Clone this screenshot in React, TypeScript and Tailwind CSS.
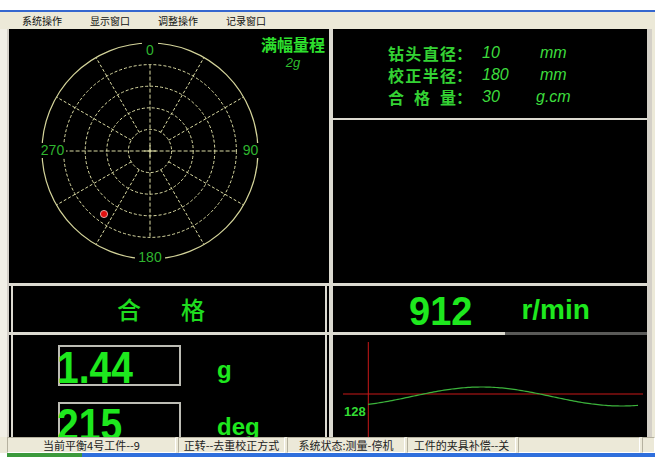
import React from "react";

const GRID = "#dcdca4";

function Polar() {
  const cx = 141;
  const cy = 122;
  const R = 108;
  const rings = [21.6, 43.2, 64.8, 86.4];
  const spokes = [30, 60, 120, 150, 210, 240, 300, 330];
  return (
    <svg width="320" height="254" viewBox="0 0 320 254" className="block">
      {rings.map((r) => (
        <circle key={r} cx={cx} cy={cy} r={r} fill="none" stroke={GRID} strokeWidth="1" strokeDasharray="3 2" />
      ))}
      {spokes.map((a) => {
        const rad = (a * Math.PI) / 180;
        return (
          <line
            key={a}
            x1={cx + 21.6 * Math.sin(rad)}
            y1={cy - 21.6 * Math.cos(rad)}
            x2={cx + R * Math.sin(rad)}
            y2={cy - R * Math.cos(rad)}
            stroke={GRID}
            strokeWidth="1"
            strokeDasharray="3 2"
          />
        );
      })}
      <line x1={cx - 86.4} y1={cy} x2={cx + 86.4} y2={cy} stroke={GRID} strokeWidth="1" strokeDasharray="4 2" />
      <line x1={cx} y1={cy - 86.4} x2={cx} y2={cy + 86.4} stroke={GRID} strokeWidth="1" strokeDasharray="4 2" />
      <line x1={cx - 6} y1={cy} x2={cx + 6} y2={cy} stroke={GRID} strokeWidth="1" />
      <line x1={cx} y1={cy - 6} x2={cx} y2={cy + 6} stroke={GRID} strokeWidth="1" />
      <circle cx={cx} cy={cy} r={R} fill="none" stroke="#d4d49a" strokeWidth="1.2" />
      <rect x="133" y="13" width="16" height="15" fill="#000" />
      <rect x="126" y="220" width="30" height="15" fill="#000" />
      <rect x="31" y="114" width="26" height="15" fill="#000" />
      <rect x="233" y="114" width="18" height="15" fill="#000" />
      <g fontFamily="'Liberation Sans', sans-serif" fontSize="14" fill="#2fb52f" textAnchor="middle">
        <text x="141" y="26">0</text>
        <text x="141" y="232.5">180</text>
        <text x="43.5" y="125.5">270</text>
        <text x="241.5" y="125.5">90</text>
      </g>
      <circle cx="95" cy="185" r="3.6" fill="#e01010" stroke="#f3c4c4" strokeWidth="0.8" />
    </svg>
  );
}

function Wave() {
  const pts: string[] = [];
  for (let x = 35; x <= 305; x += 2) {
    const y = 61.5 - 9.5 * Math.cos((2 * Math.PI * (x + 333 - 481.7)) / 280);
    pts.push(`${x},${y.toFixed(2)}`);
  }
  return (
    <svg width="314" height="102" viewBox="0 0 314 102" className="block">
      <line x1="35.3" y1="7" x2="35.3" y2="102" stroke="#c81818" strokeWidth="1" />
      <line x1="10" y1="59" x2="310" y2="59" stroke="#c81818" strokeWidth="1" />
      <polyline points={pts.join(" ")} fill="none" stroke="#3cb43c" strokeWidth="1.2" />
      <text x="11" y="81" fontFamily="'Liberation Sans', sans-serif" fontSize="13" fontWeight="bold" fill="#33dd33">
        128
      </text>
    </svg>
  );
}

const rows = [
  { label: ["钻", "头", "直", "径"], num: "10", unit: "mm", shift: false },
  { label: ["校", "正", "半", "径"], num: "180", unit: "mm", shift: false },
  { label: ["合", "格", "量"], num: "30", unit: "g.cm", shift: true },
];

export default function App() {
  return (
    <div className="w-[665px] h-[463px] bg-white overflow-hidden font-['Liberation_Sans','Noto_Sans_CJK_SC',sans-serif]">
      <div className="h-[10px]" />
      <div className="h-[2px] w-[655px] bg-[#3567cf]" />
      <div className="h-[17px] w-[655px] bg-[#ece9d8] flex items-center pl-[22px] text-[10px] text-[#111] font-['Noto_Sans_CJK_SC',sans-serif]">
        {["系统操作", "显示窗口", "调整操作", "记录窗口"].map((t) => (
          <div key={t} className="w-[68px] leading-none">
            {t}
          </div>
        ))}
      </div>

      <div className="flex h-[408px] w-[655px]">
        <div className="w-[7px] bg-[#f1efe6]" />
        <div className="w-[640px] flex bg-black border-l-2 border-[#d4d0c8]">
          {/* left column */}
          <div className="w-[320px] flex flex-col">
            <div className="h-[254px] relative">
              <Polar />
              <div className="absolute top-[7px] right-[4px] flex flex-col items-center">
                <span className="text-[16px] leading-[16px] font-bold text-[#2ee02e] font-['Noto_Sans_CJK_SC',sans-serif]">
                  满幅量程
                </span>
                <span className="mt-[4px] text-[13px] leading-none italic text-[#2ebd2e]">2g</span>
              </div>
            </div>
            <div className="h-[3px] bg-[#dcdad0]" />
            <div className="h-[46px] mx-[2px] border-x-2 border-[#dcdad0] flex items-center pl-[104px] gap-[40px] text-[24px] leading-none font-medium text-[#1fdc1f] font-['Noto_Sans_CJK_SC',sans-serif]">
              <span>合</span>
              <span>格</span>
            </div>
            <div className="h-[3px] bg-[#dcdad0]" />
            <div className="h-[102px] mx-[2px] border-x-2 border-[#dcdad0] overflow-hidden pl-[45px] pt-[10px] flex flex-col gap-[16px] text-[#1ee81e] font-bold">
              <div className="flex items-start">
                <div className="w-[123px] h-[41px] shrink-0 border-2 border-[#bcbcb4]">
                  <span className="block -ml-[3px] mt-[4px] text-[39px] leading-none origin-bottom scale-y-[1.12]">1.44</span>
                </div>
                <span className="ml-[36px] mt-[13px] text-[24px] leading-none">g</span>
              </div>
              <div className="flex items-start">
                <div className="w-[123px] h-[41px] shrink-0 border-2 border-[#bcbcb4]">
                  <span className="block -ml-[3px] mt-[4px] text-[39px] leading-none origin-bottom scale-y-[1.12]">215</span>
                </div>
                <span className="ml-[36px] mt-[13px] text-[24px] leading-none">deg</span>
              </div>
            </div>
          </div>

          <div className="w-[4px] bg-[#dcdad0]" />

          {/* right column */}
          <div className="w-[314px] flex flex-col">
            <div className="h-[89px] pt-[13px] pl-[55px] flex flex-col">
              {rows.map((r) => (
                <div key={r.num} className="h-[22px] flex items-center">
                  <div className="w-[94px] flex items-center text-[16px] leading-none font-bold text-[#34d234] font-['Noto_Sans_CJK_SC',sans-serif]">
                    <div className="w-[68px] flex justify-between">
                      {r.label.map((c) => (
                        <span key={c}>{c}</span>
                      ))}
                    </div>
                    <span>：</span>
                  </div>
                  <span className="w-[58px] text-[16px] leading-none italic text-[#3ddc3d]">{r.num}</span>
                  <span className={`text-[16px] leading-none italic text-[#3ddc3d] ${r.shift ? "-ml-[4px]" : ""}`}>{r.unit}</span>
                </div>
              ))}
            </div>
            <div className="h-[2px] bg-[#dcdad0]" />
            <div className="h-[163px]" />
            <div className="h-[3px] bg-[#dcdad0]" />
            <div className="h-[46px] flex items-start pl-[76px] font-bold text-[#1ee81e]">
              <span className="mt-[7px] text-[38px] leading-none origin-bottom scale-y-[1.08]">912</span>
              <span className="ml-[49px] mt-[10px] text-[28px] leading-none">r/min</span>
            </div>
            <div className="h-[3px] flex">
              <div className="w-[172px] bg-[#dcdad0]" />
              <div className="flex-1 bg-[#5a5a58]" />
            </div>
            <div className="h-[102px]">
              <Wave />
            </div>
          </div>
        </div>
        <div className="w-[5px] bg-[#d4d0c8]" />
        <div className="w-[3px] bg-[#ece9d8]" />
      </div>

      <div className="h-[16px] w-[655px] bg-[#ece9d8] flex pl-[7px] gap-[2px] text-[11px] text-[#222] font-['Noto_Sans_CJK_SC',sans-serif]">
        {[
          { w: "w-[169px]", t: "当前平衡4号工件--9" },
          { w: "w-[107px]", t: "正转--去重校正方式" },
          { w: "w-[118px]", t: "系统状态:测量-停机" },
          { w: "w-[109px]", t: "工件的夹具补偿--关" },
          { w: "w-[122px]", t: "" },
          { w: "w-[13px]", t: "" },
        ].map((s, i) => (
          <div
            key={i}
            className={`${s.w} shrink-0 flex items-center justify-center leading-none border border-t-[#b5b19f] border-l-[#b5b19f] border-b-white border-r-white`}
          >
            {s.t}
          </div>
        ))}
      </div>
      <div className="h-[4px] w-[655px] flex">
        <div className="w-[7px] bg-white" />
        <div className="w-[75px] bg-[#3c9a3c]" />
        <div className="flex-1 bg-[#2f6fdc]" />
      </div>
    </div>
  );
}
